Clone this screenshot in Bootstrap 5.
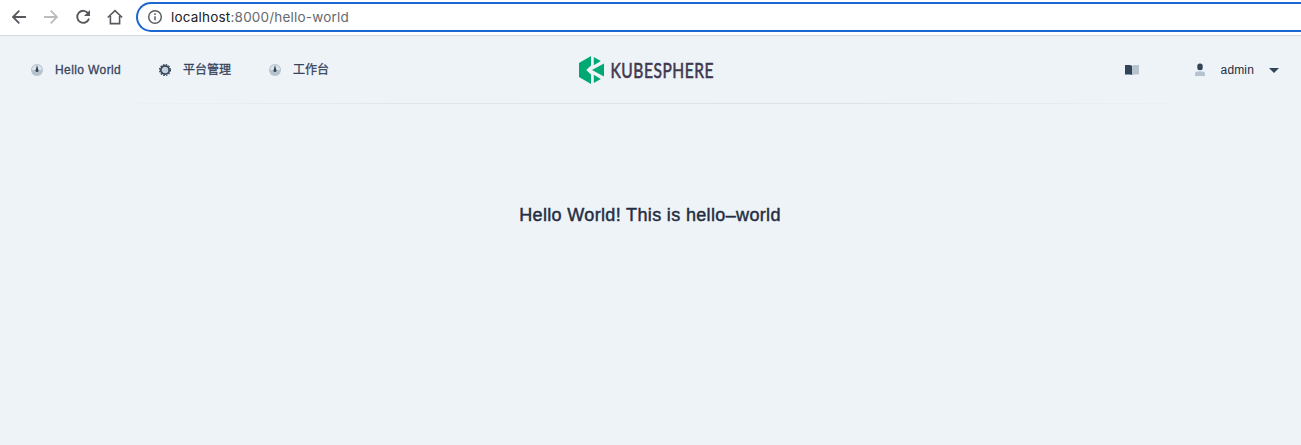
<!DOCTYPE html>
<html lang="zh">
<head>
<meta charset="utf-8">
<meta name="viewport" content="width=device-width, initial-scale=1">
<title>Hello World</title>
<link href="https://cdn.jsdelivr.net/npm/bootstrap@5.3.0/dist/css/bootstrap.min.css" rel="stylesheet">
<style>
body{background:#eef3f8;font-family:"Liberation Sans","Noto Sans CJK SC",sans-serif;color:#242e42;height:445px;overflow:hidden}
svg{display:block;flex:none}
.browser-bar{height:36px;background:#fff;border-bottom:1px solid #d5d9dd;padding-left:11px}
.tools{gap:16px;margin-right:13px;margin-top:-2px}
.address{height:30px;margin-top:-2px;border:2px solid #1b66d2;border-right:0;border-radius:15px 0 0 15px;padding-left:9px;font-family:Inter,sans-serif;font-size:13.5px;letter-spacing:.2px;color:#66696d}
.address b{font-weight:400;color:#202124}
.topbar{height:68px}
.topbar::after{content:"";display:block;height:1px;position:absolute;left:0;right:0;bottom:0;background:linear-gradient(90deg,transparent 6%,#dde4ea 35%,#dbe2e8 65%,transparent 94%)}
.side-start{width:575px;padding-left:30px}
.menu-link{color:#36435c;font-size:12px;gap:11px;line-height:20px;-webkit-text-stroke:.3px #36435c}
.menu-link:first-child{letter-spacing:.4px}
.user{font-size:12px;letter-spacing:.15px}
.headline{font-size:18px;font-weight:400;-webkit-text-stroke:.45px #242e42;letter-spacing:.35px;line-height:24px;margin-top:99px;padding-right:1px}
</style>
</head>
<body>
<div class="browser-bar d-flex align-items-center">
  <div class="tools d-flex align-items-center">
    <svg width="16" height="16" fill="none" stroke="#55585c" stroke-width="1.8"><path d="M15 8H2M8.3 1.7 2 8l6.3 6.3"/></svg>
    <svg width="16" height="16" fill="none" stroke="#babcbe" stroke-width="1.8"><path d="M1 8h13M7.700 1.700 14 8l-6.300 6.300"/></svg>
    <svg width="16" height="16" fill="none" stroke="#55585c" stroke-width="1.900"><path d="M13.300 4.600A6 6 0 1 0 14 9.500"/><path d="M15 1v6H9z" fill="#55585c" stroke="none"/></svg>
    <svg width="16" height="16" fill="none" stroke="#55585c" stroke-width="1.600"><path d="M.800 8.500 8 1.600l7.200 6.900M3.400 7v7.600h9.200V7"/></svg>
  </div>
  <div class="address d-flex align-items-center flex-grow-1">
    <svg style="margin-right:8px" width="16" height="16" fill="none" stroke="#5b5e62" stroke-width="1.500"><circle cx="8" cy="8" r="6.300"/><path d="M8 7.200v4M8 4.300v1.600"/></svg>
    <div style="line-height:16px;padding-top:1px"><b>localhost</b>:8000/hello-world</div>
  </div>
</div>
<nav class="topbar position-relative d-flex align-items-center">
  <div class="side-start flex-shrink-0 d-flex">
    <a class="menu-link d-flex align-items-center text-decoration-none" style="width:128px"><svg width="14" height="14"><circle cx="7" cy="7" r="6" fill="#b6c2cd"/><path d="M2 7a5 5 0 0 1 10 0z" fill="#dce4ea"/><path d="m7 2 1.500 5.500a1.500 1.500 0 0 1-3 0z" fill="#324558"/></svg><span>Hello World</span></a>
    <a class="menu-link d-flex align-items-center text-decoration-none" style="width:110px"><svg width="14" height="14"><circle cx="7" cy="7" r="4.200" fill="#c4ced7" stroke="#324558" stroke-width="1.700"/><circle cx="7" cy="7" r="5.400" fill="none" stroke="#324558" stroke-width="1.300" stroke-dasharray="1.600 1.230"/></svg><span>平台管理</span></a>
    <a class="menu-link d-flex align-items-center text-decoration-none"><svg width="14" height="14"><circle cx="7" cy="7" r="6" fill="#b6c2cd"/><path d="M2 7a5 5 0 0 1 10 0z" fill="#dce4ea"/><path d="m7 2 1.500 5.500a1.500 1.500 0 0 1-3 0z" fill="#324558"/></svg><span>工作台</span></a>
  </div>
  <svg width="150" height="32" viewBox="575 54 150 32" overflow="visible"><path d="M591 56v9.500L586.200 70l4.800 4.500V84l-12-7V63zM593.800 57l7 4-7 4.200zM604 63.500v13L592 70zM593.800 74.800l7 4.200-7 4z" fill="#00a971"/><text transform="translate(610.500 77.600) scale(.76 1)" font-family="Lato" font-size="20.500" fill="#41394e" stroke="#41394e" stroke-width=".6" letter-spacing="1.500" textLength="137" lengthAdjust="spacing">KUBESPHERE</text></svg>
  <div class="user flex-grow-1 d-flex align-items-center justify-content-end">
    <svg width="14" height="12" style="margin-right:55px"><path d="M0 1h5l2 .700V11l-2-.500H0z" fill="#324558"/><path d="m7 1.700 2-.700h5v9.500H9L7 11z" fill="#b6c2cd"/></svg>
    <svg width="12" height="14"><path d="M1 13v-2.500q0-2 2-2h6q2 0 2 2V13z" fill="#b6c2cd"/><rect x="3.300" y=".500" width="5.400" height="6.800" rx="2.500" fill="#324558"/></svg>
    <span style="margin:0 15px 0 15px">admin</span>
    <svg width="10" height="5" style="margin-right:22px"><path d="M0 0h10L5 5z" fill="#324558"/></svg>
  </div>
</nav>
<main class="text-center"><h1 class="headline mb-0">Hello World! This is hello–world</h1></main>
<script src="https://cdn.jsdelivr.net/npm/bootstrap@5.3.0/dist/js/bootstrap.bundle.min.js"></script>
</body>
</html>
